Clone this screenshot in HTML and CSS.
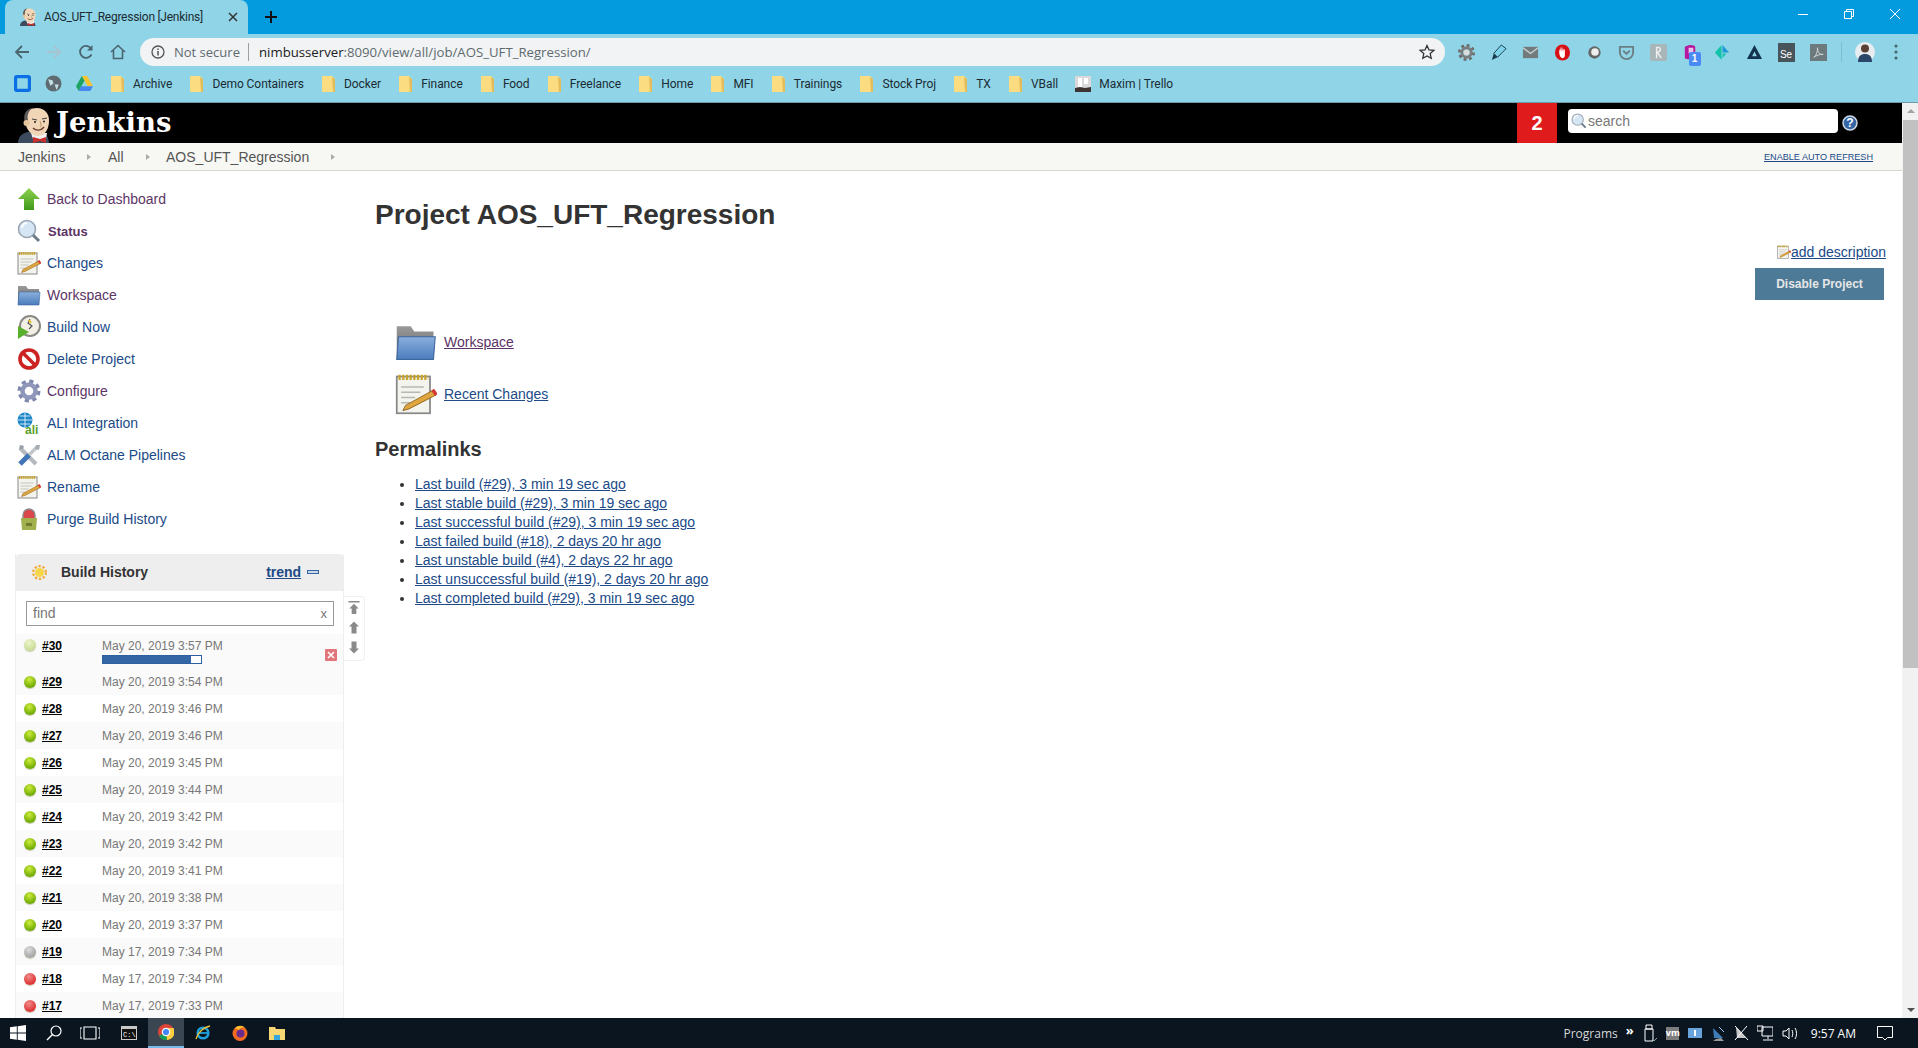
FILE: index.html
```html
<!DOCTYPE html>
<html lang="en">
<head>
    <meta charset="UTF-8">
    <meta name="viewport" content="width=device-width, initial-scale=1.0">
    <title>AOS_UFT_Regression [Jenkins]</title>
    <link rel="stylesheet" href="styles.css">
</head>
<body>

<svg class="icon-defs" width="0" height="0">
    <defs>
        <linearGradient id="greenUp" x1="0" y1="0" x2="0" y2="1"><stop offset="0" stop-color="#8fd14f"/><stop offset="1" stop-color="#3f9a1c"/></linearGradient>
        <linearGradient id="blueFolder" x1="0" y1="0" x2="0" y2="1"><stop offset="0" stop-color="#8bb0de"/><stop offset="1" stop-color="#4a7cbc"/></linearGradient>
        <linearGradient id="grayFolder" x1="0" y1="0" x2="0" y2="1"><stop offset="0" stop-color="#9a9a9a"/><stop offset="1" stop-color="#5e5e5e"/></linearGradient>
        <symbol id="jenkins" viewBox="0 0 32 36">
            <path d="M0 36c0-7 5-10 10-11h14c3 1 6 3 7 11z" fill="#3c4a5e"/>
            <path d="M13 26h16l-1 6H15z" fill="#f1f1f1"/>
            <path d="M7 12C7 4 13 1 19 1c7 0 12 5 12 12 0 7-2 11-5 14-3 2-8 3-12 0-4-3-7-8-7-15z" fill="#f0d6b7"/>
            <path d="M8 17C4 10 7 2 14 1c-4 4-5 8-4 12z" fill="#5f5b58"/>
            <circle cx="8.500" cy="16" r="3" fill="#e6c49c"/>
            <path d="M14 12l5 1M24 12l5-1" stroke="#444" stroke-width="1.200" fill="none"/>
            <circle cx="17" cy="15" r="1" fill="#222"/><circle cx="26" cy="14.500" r="1" fill="#222"/>
            <path d="M22 14c1 3 2 5 0 6" stroke="#b9926b" fill="none"/>
            <path d="M15 21c3 3 8 3 11-1" stroke="#6b3a2a" stroke-width="1.400" fill="none"/>
            <path d="M15 30l7 2 6-2v6l-6-2-7 2z" fill="#c9302c"/>
        </symbol>
        <symbol id="bmfolder" viewBox="0 0 13 16">
            <path d="M0 0h10l3 3v13H0z" fill="#fbdc80"/>
            <path d="M10 1l3 2v13h-2z" fill="#e3bd5c"/>
        </symbol>
        <symbol id="arrowUp" viewBox="0 0 24 24">
            <path d="M12 1l11 11h-6v11H7V12H1z" fill="url(#greenUp)"/>
        </symbol>
        <symbol id="lens" viewBox="0 0 24 24">
            <circle cx="10" cy="10" r="8.500" fill="#d6e6f5" stroke="#9aa7b5" stroke-width="1.600"/>
            <path d="M5 9a5 5 0 0 1 5-5" stroke="#fff" stroke-width="2" fill="none"/>
            <path d="M16 16l6 6" stroke="#6e7c8a" stroke-width="3"/>
        </symbol>
        <symbol id="notepad" viewBox="0 0 24 24">
            <rect x="1" y="2" width="19" height="21" fill="#f4f4ef" stroke="#888"/>
            <path d="M2 2.500h17" stroke="#c9a42c" stroke-width="3" stroke-dasharray="1.300 .8"/>
            <path d="M3.500 8h13M3.500 11h11M3.500 14h8M3.500 17h5" stroke="#b8b8b2" stroke-width=".8"/>
            <path d="M6 18.500L21.500 10l2 2.500L8 20.500l-3.500 1z" fill="#dfa63f" stroke="#8a6018" stroke-width=".5"/>
            <path d="M21.500 9.600l2.200 2.900" stroke="#d33833" stroke-width="2"/>
        </symbol>
        <symbol id="folder" viewBox="0 0 24 24">
            <path d="M1 3h8l2 3h11v16H1z" fill="url(#grayFolder)"/>
            <path d="M2 9h21l-1 13H1z" fill="url(#blueFolder)" stroke="#3d679e" stroke-width=".6"/>
        </symbol>
        <symbol id="clock" viewBox="0 0 24 24">
            <circle cx="13" cy="11" r="10" fill="#f2f0e4" stroke="#8a8a84" stroke-width="2"/>
            <path d="M13 4l-2 4 4 3-3 3" stroke="#555" stroke-width="1.200" fill="none"/>
            <path d="M12 5l2 3" stroke="#e8c02c" stroke-width="2"/>
            <path d="M1 11l11 6-11 7z" fill="#58b02c"/>
        </symbol>
        <symbol id="nogo" viewBox="0 0 24 24">
            <circle cx="12" cy="12" r="9" fill="#fff" stroke="#cc2222" stroke-width="3.600"/>
            <path d="M5.500 5.500l13 13" stroke="#cc2222" stroke-width="3.600"/>
        </symbol>
        <symbol id="gear" viewBox="0 0 24 24">
            <circle cx="12" cy="12" r="9.500" fill="none" stroke="#7f89ad" stroke-width="4" stroke-dasharray="4 3.460"/>
            <circle cx="12" cy="12" r="6.500" fill="none" stroke="#8f98ba" stroke-width="4.500"/>
            <circle cx="12" cy="12" r="3.500" fill="#fff"/>
        </symbol>
        <symbol id="ali" viewBox="0 0 24 24">
            <circle cx="8" cy="9" r="7.500" fill="#1d87c9"/>
            <path d="M1 9h14M8 2v14M3 5h10M3 13h10" stroke="#fff" stroke-width=".8"/>
            <text x="8" y="23" class="ali-text">ali</text>
        </symbol>
        <symbol id="tools" viewBox="0 0 24 24">
            <path d="M3 5l16 16" stroke="#b5b9bf" stroke-width="4"/>
            <path d="M2 6l1-4 4 1-1 3z" fill="#9aa0a8"/>
            <path d="M12 12l8-8" stroke="#c3c7cc" stroke-width="3.500"/>
            <path d="M23 2l-1 5-4-1 1-4z" fill="#a8acb3"/>
            <path d="M3 21l9-9" stroke="#3f74b5" stroke-width="5"/>
        </symbol>
        <symbol id="purge" viewBox="0 0 24 24">
            <path d="M6 12V8a6 6 0 0 1 12 0v4z" fill="#d9474a" stroke="#8d8d8d" stroke-width="1.400"/>
            <path d="M4 11h16l-1 12H5z" fill="#a3b04e"/>
            <path d="M9 16h6v3H9z" fill="#6f7c2c"/>
        </symbol>
        <symbol id="toparrow" viewBox="0 0 12 14">
            <path d="M0 0h12v1.500H0zM6 3l5 5H8.500v6h-5V8H1z" fill="#8a8a8a"/>
        </symbol>
        <symbol id="uparrow" viewBox="0 0 12 12">
            <path d="M6 0l5 5H8.500v7h-5V5H1z" fill="#8a8a8a"/>
        </symbol>
    </defs>
</svg>

<div class="browser">

    <div class="tabstrip">
        <div class="tab">
            <svg class="tab-favicon"><use href="#jenkins"/></svg>
            <span class="tab-title">AOS_UFT_Regression [Jenkins]</span>
            <svg class="tab-close" viewBox="0 0 10 10"><path d="M1 1l8 8M9 1l-8 8" stroke="#333" stroke-width="1.500"/></svg>
        </div>
        <svg class="new-tab" viewBox="0 0 14 14"><path d="M7 1v12M1 7h12" stroke="#111" stroke-width="2"/></svg>
        <div class="window-controls">
            <svg class="win-btn" viewBox="0 0 12 12"><path d="M1 6.500h10" stroke="#fff"/></svg>
            <svg class="win-btn" viewBox="0 0 12 12"><path d="M1.500 3.500h7v7h-7zM3.500 3.500v-2h7v7h-2" stroke="#fff" fill="none"/></svg>
            <svg class="win-btn" viewBox="0 0 12 12"><path d="M1 1l10 10M11 1L1 11" stroke="#fff"/></svg>
        </div>
    </div>

    <div class="toolbar">
        <svg class="nav-btn" viewBox="0 0 16 16"><path d="M15 8H2M8 2L2 8l6 6" stroke="#4b6470" stroke-width="1.800" fill="none"/></svg>
        <svg class="nav-btn" viewBox="0 0 16 16"><path d="M1 8h13M8 2l6 6-6 6" stroke="#a7c3cf" stroke-width="1.800" fill="none"/></svg>
        <svg class="nav-btn" viewBox="0 0 16 16"><path d="M13.500 10.500A6 6 0 1 1 13 4.500" stroke="#4b6470" stroke-width="1.800" fill="none"/><path d="M14.500 1v5.500H9z" fill="#4b6470"/></svg>
        <svg class="nav-btn" viewBox="0 0 16 16"><path d="M1 8l7-6.500L15 8M3.500 6.500V14.500h9V6.500" stroke="#4b6470" stroke-width="1.600" fill="none"/></svg>
        <div class="omnibox">
            <svg class="omni-info" viewBox="0 0 14 14"><circle cx="7" cy="7" r="6" fill="none" stroke="#555" stroke-width="1.300"/><path d="M7 6v4.500M7 3.500v1.500" stroke="#555" stroke-width="1.500"/></svg>
            <span class="omni-secure">Not secure</span>
            <span class="omni-url"><span class="omni-host">nimbusserver</span>:8090/view/all/job/AOS_UFT_Regression/</span>
            <svg class="omni-star" viewBox="0 0 16 16"><path d="M8 1.500l2 4.400 4.800.5-3.600 3.200 1 4.700L8 11.900l-4.200 2.400 1-4.700L1.200 6.400 6 5.900z" fill="none" stroke="#333" stroke-width="1.300"/></svg>
        </div>
        <div class="extensions">
            <svg class="ext" viewBox="0 0 18 18"><circle cx="9" cy="9" r="7.500" fill="none" stroke="#6b6b6b" stroke-width="3" stroke-dasharray="3 2.890"/><circle cx="9" cy="9" r="5" fill="none" stroke="#7d7d7d" stroke-width="3"/><circle cx="9" cy="9" r="3" fill="#dcdcdc"/></svg>
            <svg class="ext" viewBox="0 0 18 18"><path d="M12 1l5 4-9 9-4-4z" fill="#7fd3e8" stroke="#1b3a4a" stroke-width="1"/><path d="M4 10l4 4-6 3z" fill="#1b3a4a"/></svg>
            <svg class="ext" viewBox="0 0 18 18"><rect x="1" y="3" width="16" height="12" fill="#727a7c"/><path d="M1 4l8 6 8-6" stroke="#c7d4d8" stroke-width="1.500" fill="none"/></svg>
            <svg class="ext" viewBox="0 0 18 18"><ellipse cx="9" cy="9" rx="8" ry="8.500" fill="#d90f16"/><path d="M5.500 8V5l1 3V3l1.200 5V2.500L9 8V3l1.200 5V5l1.300 1v6c0 2-1 3-2.500 3-2 0-3.500-3-3.500-7z" fill="#fff"/></svg>
            <svg class="ext" viewBox="0 0 18 18"><circle cx="9" cy="9" r="6.500" fill="#666"/><circle cx="9.500" cy="8.500" r="4" fill="#eee"/></svg>
            <svg class="ext" viewBox="0 0 18 18"><path d="M2 3h14v6a7 7 0 0 1-14 0z" fill="none" stroke="#6c7f85" stroke-width="2"/><path d="M5.500 7L9 10.500 12.500 7" stroke="#6c7f85" stroke-width="2" fill="none"/></svg>
            <svg class="ext" viewBox="0 0 18 18"><rect width="18" height="18" rx="2" fill="#a8b5b9"/><path d="M7 3v12M7 4c4-2 6 3 1 5l4 6" stroke="#eee" stroke-width="1.500" fill="none"/></svg>
            <div class="ext-wrap">
                <svg class="ext" viewBox="0 0 18 18"><path d="M3 3c5-3 10-2 11 0v10c-3 3-8 4-11 2z" fill="#b5179e"/><rect x="7" y="4" width="5" height="6" fill="#e7c5e8"/></svg>
                <span class="ext-badge">1</span>
            </div>
            <svg class="ext" viewBox="0 0 18 18"><path d="M8 1v16L1 9z" fill="#12c2a9"/><path d="M9 1l7 8H9z" fill="#1d9ad6"/><path d="M9 10h4l-4 5z" fill="#12c2a9"/></svg>
            <svg class="ext" viewBox="0 0 18 18"><path d="M9 1l8 15H1z" fill="#12324f"/><path d="M9 8l2.500 5h-5z" fill="#8fd5e7"/></svg>
            <div class="ext-se">Se</div>
            <svg class="ext" viewBox="0 0 18 18"><rect width="18" height="18" fill="#6d7a7d"/><path d="M4 14c3-2 4-6 4-10 0 5 2 7 6 7-4 0-7 1-10 3z" stroke="#d3d9da" fill="none"/></svg>
            <span class="ext-divider"></span>
            <svg class="ext-avatar" viewBox="0 0 20 20"><circle cx="10" cy="10" r="10" fill="#e9ecef"/><path d="M3 20c0-6 3-8 7-8s7 2 7 8z" fill="#2a4668"/><circle cx="10" cy="6.500" r="4" fill="#5b4034"/></svg>
            <svg class="ext-menu" viewBox="0 0 4 16"><circle cx="2" cy="2" r="1.600" fill="#4b6470"/><circle cx="2" cy="8" r="1.600" fill="#4b6470"/><circle cx="2" cy="14" r="1.600" fill="#4b6470"/></svg>
        </div>
    </div>

    <div class="bookmarks">
        <svg class="bm-app" viewBox="0 0 16 16"><rect x="1.500" y="1.500" width="13" height="13" rx="1" fill="none" stroke="#0b6fe6" stroke-width="3"/></svg>
        <svg class="bm-app" viewBox="0 0 16 16"><circle cx="8" cy="8" r="7.500" fill="#5f6b70"/><path d="M3 4l4 1 1 3-3 2zM9 9l4 0-2 5z" fill="#c5dfe7"/></svg>
        <svg class="bm-app bm-drive" viewBox="0 0 16 16"><path d="M5.500 1h5L16 10.500h-5z" fill="#f6c42d"/><path d="M5.500 1L0 10.500 2.500 15 8 5.500z" fill="#1ea362"/><path d="M2.500 15h11l2.500-4.500H5z" fill="#4688f1"/></svg>
        <div class="bm"><svg class="bm-folder"><use href="#bmfolder"/></svg>Archive</div>
        <div class="bm"><svg class="bm-folder"><use href="#bmfolder"/></svg>Demo Containers</div>
        <div class="bm"><svg class="bm-folder"><use href="#bmfolder"/></svg>Docker</div>
        <div class="bm"><svg class="bm-folder"><use href="#bmfolder"/></svg>Finance</div>
        <div class="bm"><svg class="bm-folder"><use href="#bmfolder"/></svg>Food</div>
        <div class="bm"><svg class="bm-folder"><use href="#bmfolder"/></svg>Freelance</div>
        <div class="bm"><svg class="bm-folder"><use href="#bmfolder"/></svg>Home</div>
        <div class="bm"><svg class="bm-folder"><use href="#bmfolder"/></svg>MFI</div>
        <div class="bm"><svg class="bm-folder"><use href="#bmfolder"/></svg>Trainings</div>
        <div class="bm"><svg class="bm-folder"><use href="#bmfolder"/></svg>Stock Proj</div>
        <div class="bm"><svg class="bm-folder"><use href="#bmfolder"/></svg>TX</div>
        <div class="bm"><svg class="bm-folder"><use href="#bmfolder"/></svg>VBall</div>
        <div class="bm bm-trello">
            <svg class="bm-folder bm-photo" viewBox="0 0 16 16"><rect width="16" height="16" fill="#d9d9d9"/><rect x="3" y="2" width="4" height="9" fill="#fff"/><rect x="9" y="2" width="4" height="6" fill="#fff"/><path d="M0 16v-4l5-1 5 1 6-1v5z" fill="#3d3431"/></svg>
            Maxim | Trello
        </div>
    </div>

    <div class="page">
        <div class="page-content">

            <header class="jenkins-header">
                <svg class="logo-head"><use href="#jenkins"/></svg>
                <span class="logo-text">Jenkins</span>
                <span class="queue-count">2</span>
                <div class="search-box">
                    <svg class="search-icon"><use href="#lens"/></svg>
                    <span>search</span>
                </div>
                <svg class="help-icon" viewBox="0 0 16 16"><circle cx="8" cy="8" r="7" fill="#3465a4" stroke="#cfd9e6" stroke-width="1.500"/><text x="8" y="12" class="help-mark">?</text></svg>
            </header>

            <nav class="breadcrumbs">
                <span class="crumb">Jenkins</span><span class="crumb-sep"></span>
                <span class="crumb">All</span><span class="crumb-sep"></span>
                <span class="crumb">AOS_UFT_Regression</span><span class="crumb-sep"></span>
                <a class="auto-refresh">ENABLE AUTO REFRESH</a>
            </nav>

            <div class="columns">
                <aside class="sidebar">
                    <ul class="tasks">
                        <li><svg class="task-icon"><use href="#arrowUp"/></svg><a class="visited">Back to Dashboard</a></li>
                        <li class="task-current"><svg class="task-icon"><use href="#lens"/></svg><a class="visited">Status</a></li>
                        <li><svg class="task-icon"><use href="#notepad"/></svg><a>Changes</a></li>
                        <li><svg class="task-icon"><use href="#folder"/></svg><a class="visited">Workspace</a></li>
                        <li><svg class="task-icon"><use href="#clock"/></svg><a>Build Now</a></li>
                        <li><svg class="task-icon"><use href="#nogo"/></svg><a>Delete Project</a></li>
                        <li><svg class="task-icon"><use href="#gear"/></svg><a class="visited">Configure</a></li>
                        <li><svg class="task-icon"><use href="#ali"/></svg><a>ALI Integration</a></li>
                        <li><svg class="task-icon"><use href="#tools"/></svg><a>ALM Octane Pipelines</a></li>
                        <li><svg class="task-icon"><use href="#notepad"/></svg><a>Rename</a></li>
                        <li><svg class="task-icon"><use href="#purge"/></svg><a>Purge Build History</a></li>
                    </ul>

                    <div class="history-wrap">
                        <section class="history">
                            <div class="history-head">
                                <svg class="sun" viewBox="0 0 16 16"><circle cx="8" cy="8" r="6.800" fill="none" stroke="#f2a93b" stroke-width="2.400" stroke-dasharray="2.500 1.800"/><circle cx="8" cy="8" r="4.800" fill="#f7d64a"/></svg>
                                <span class="history-title">Build History</span>
                                <a class="trend">trend</a>
                                <span class="collapse"></span>
                            </div>
                            <div class="history-find"><span>find</span><span class="find-x">x</span></div>
                            <div class="build build-running">
                                <span class="ball ball-pending"></span>
                                <a class="build-no">#30</a>
                                <div class="build-date">
                                    May 20, 2019 3:57 PM
                                    <div class="progress"><div class="progress-fill"></div></div>
                                </div>
                                <svg class="build-stop" viewBox="0 0 12 12"><rect width="12" height="12" rx="1" fill="#e2757b"/><path d="M3 3l6 6M9 3l-6 6" stroke="#fff" stroke-width="1.600"/></svg>
                            </div>
                            <div class="build"><span class="ball"></span><a class="build-no">#29</a><div class="build-date">May 20, 2019 3:54 PM</div></div>
                            <div class="build"><span class="ball"></span><a class="build-no">#28</a><div class="build-date">May 20, 2019 3:46 PM</div></div>
                            <div class="build"><span class="ball"></span><a class="build-no">#27</a><div class="build-date">May 20, 2019 3:46 PM</div></div>
                            <div class="build"><span class="ball"></span><a class="build-no">#26</a><div class="build-date">May 20, 2019 3:45 PM</div></div>
                            <div class="build"><span class="ball"></span><a class="build-no">#25</a><div class="build-date">May 20, 2019 3:44 PM</div></div>
                            <div class="build"><span class="ball"></span><a class="build-no">#24</a><div class="build-date">May 20, 2019 3:42 PM</div></div>
                            <div class="build"><span class="ball"></span><a class="build-no">#23</a><div class="build-date">May 20, 2019 3:42 PM</div></div>
                            <div class="build"><span class="ball"></span><a class="build-no">#22</a><div class="build-date">May 20, 2019 3:41 PM</div></div>
                            <div class="build"><span class="ball"></span><a class="build-no">#21</a><div class="build-date">May 20, 2019 3:38 PM</div></div>
                            <div class="build"><span class="ball"></span><a class="build-no">#20</a><div class="build-date">May 20, 2019 3:37 PM</div></div>
                            <div class="build"><span class="ball ball-aborted"></span><a class="build-no">#19</a><div class="build-date">May 17, 2019 7:34 PM</div></div>
                            <div class="build"><span class="ball ball-failed"></span><a class="build-no">#18</a><div class="build-date">May 17, 2019 7:34 PM</div></div>
                            <div class="build"><span class="ball ball-failed"></span><a class="build-no">#17</a><div class="build-date">May 17, 2019 7:33 PM</div></div>
                        </section>
                        <div class="history-arrows">
                            <svg class="page-arrow"><use href="#toparrow"/></svg>
                            <svg class="page-arrow"><use href="#uparrow"/></svg>
                            <svg class="page-arrow page-arrow-down"><use href="#uparrow"/></svg>
                        </div>
                    </div>
                </aside>

                <main class="main">
                    <h1>Project AOS_UFT_Regression</h1>
                    <div class="description-row">
                        <svg class="desc-icon"><use href="#notepad"/></svg><a class="link">add description</a>
                    </div>
                    <div class="disable-row"><button class="disable-btn">Disable Project</button></div>

                    <div class="big-link"><svg class="big-icon"><use href="#folder"/></svg><a class="link visited">Workspace</a></div>
                    <div class="big-link"><svg class="big-icon"><use href="#notepad"/></svg><a class="link">Recent Changes</a></div>

                    <h2>Permalinks</h2>
                    <ul class="permalinks">
                        <li><a class="link">Last build (#29), 3 min 19 sec ago</a></li>
                        <li><a class="link">Last stable build (#29), 3 min 19 sec ago</a></li>
                        <li><a class="link">Last successful build (#29), 3 min 19 sec ago</a></li>
                        <li><a class="link">Last failed build (#18), 2 days 20 hr ago</a></li>
                        <li><a class="link">Last unstable build (#4), 2 days 22 hr ago</a></li>
                        <li><a class="link">Last unsuccessful build (#19), 2 days 20 hr ago</a></li>
                        <li><a class="link">Last completed build (#29), 3 min 19 sec ago</a></li>
                    </ul>
                </main>
            </div>
        </div>

        <div class="scrollbar">
            <span class="scroll-up"></span>
            <div class="scroll-thumb"></div>
            <span class="scroll-down"></span>
        </div>
    </div>

    <footer class="taskbar">
        <svg class="task-win" viewBox="0 0 16 16"><path d="M0 2.300l6.800-1v6.300H0zM7.700 1.200L16 0v7.600H7.700zM0 8.400h6.800v6.300L0 13.700zM7.700 8.400H16V16l-8.300-1.200z" fill="#fff"/></svg>
        <svg class="task-search" viewBox="0 0 16 16"><circle cx="10" cy="6" r="5" fill="none" stroke="#fff" stroke-width="1.200"/><path d="M6.500 9.500L1 15" stroke="#fff" stroke-width="1.400"/></svg>
        <svg class="task-view" viewBox="0 0 20 14"><path d="M4 1h12v12H4zM2 2H0v10h2M18 2h2v10h-2" fill="none" stroke="#fff" stroke-width="1.100"/></svg>
        <svg class="task-cmd" viewBox="0 0 16 14"><rect width="16" height="14" fill="#c9c9c9"/><rect x="1" y="3" width="14" height="10" fill="#111"/><text x="2" y="11" class="cmd-text">C:\</text></svg>
        <div class="task-active">
            <svg class="task-app" viewBox="0 0 16 16"><circle cx="8" cy="8" r="8" fill="#db4437"/><path d="M8 8L1 12a8 8 0 0 0 8 4z" fill="#0f9d58"/><path d="M8 4h7.500A8 8 0 0 1 9 16z" fill="#ffcd40"/><circle cx="8" cy="8" r="3.700" fill="#4285f4" stroke="#fff" stroke-width="1.200"/></svg>
        </div>
        <svg class="task-app task-gap" viewBox="0 0 16 16"><circle cx="8" cy="8" r="5.300" fill="none" stroke="#1ea0dc" stroke-width="2.600"/><path d="M3 8h10" stroke="#1ea0dc" stroke-width="1.800"/><path d="M1 14C3 7 9 2 15 1" stroke="#f4c430" stroke-width="1.300" fill="none"/></svg>
        <svg class="task-app task-gap" viewBox="0 0 16 16"><circle cx="8" cy="8.500" r="7.500" fill="#f26b21"/><circle cx="8.500" cy="8.500" r="4" fill="#6a2a8e"/><path d="M3 3c3-3 8-3 10 0-3-1-5 0-6 2z" fill="#fcc02e"/></svg>
        <svg class="task-app task-gap" viewBox="0 0 16 16"><path d="M0 2h6l1 2h9v11H0z" fill="#f7d774"/><path d="M5 10h6v5H5z" fill="#35a6dc"/></svg>

        <div class="tray">
            <span class="tray-programs">Programs</span>
            <span class="tray-more">»</span>
            <svg class="tray-icon" viewBox="0 0 14 18"><path d="M3 1h6v4H3zM2 5h8v12H2z" fill="none" stroke="#fff"/><path d="M9 15l2 2 3-3" stroke="#8aa" fill="none"/></svg>
            <span class="tray-vm">vm</span>
            <svg class="tray-icon" viewBox="0 0 14 18"><rect y="4" width="14" height="10" fill="#69a5dc"/><path d="M6 6h2v6H6z" fill="#fff"/></svg>
            <svg class="tray-icon" viewBox="0 0 14 18"><path d="M2 4l10 10-9 0z" fill="#3f7cb5"/><path d="M5 15l-3 2h11l-3-3z" fill="#999"/><path d="M8 3l5 5" stroke="#9cf"/></svg>
            <svg class="tray-icon" viewBox="0 0 14 18"><path d="M2 3l10 11H3z" fill="#c8c8c8"/><path d="M1 2l13 14M13 2L1 16" stroke="#fff"/></svg>
            <svg class="tray-icon tray-net" viewBox="0 0 16 16"><path d="M5 2h11v9H5zM0 1h6v5H0zM11 11v3M6 15h10" fill="#0b1622" stroke="#fff"/></svg>
            <svg class="tray-icon tray-net" viewBox="0 0 16 16"><path d="M1 6h3l3-3v11l-3-3H1zM10 5c1 2 1 5 0 7M13 3c2 3 2 8 0 11" fill="none" stroke="#fff"/></svg>
            <span class="tray-clock">9:57 AM</span>
            <svg class="tray-note" viewBox="0 0 16 16"><path d="M.5 1.500h15v11h-5L8 15l-2.500-2.500h-5z" fill="none" stroke="#fff"/></svg>
        </div>
    </footer>
</div>

</body>
</html>
```

FILE: styles.css
```css
* {
    box-sizing: border-box;
}

html, body {
    margin: 0;
    height: 100%;
    overflow: hidden;
}

body {
    font-family: "Liberation Sans", Arial, sans-serif;
    font-size: 14px;
    color: #333;
    background: #fff;
}

a {
    color: #204a87;
}

ul {
    margin: 0;
}

.icon-defs {
    display: block;
    position: absolute;
}

.browser {
    display: flex;
    flex-direction: column;
    height: 1048px;
}

/* chrome window */

.tabstrip {
    display: flex;
    align-items: center;
    height: 34px;
    flex: none;
    padding-left: 5px;
    background: #039bde;
}

.tab {
    display: flex;
    align-items: center;
    width: 243px;
    height: 34px;
    padding: 0 0 0 15px;
    background: #8fd5e7;
    border-radius: 8px 8px 0 0;
}

.tab-favicon {
    width: 16px;
    height: 18px;
    flex: none;
}

.tab-title {
    margin-left: 8px;
    width: 177px;
    font-family: Roboto, sans-serif;
    font-size: 12px;
    letter-spacing: -0.25px;
    color: #1c2b33;
    white-space: nowrap;
}

.tab-close {
    width: 10px;
    height: 10px;
    margin-left: 7px;
}

.new-tab {
    width: 14px;
    height: 14px;
    margin-left: 16px;
}

.window-controls {
    display: flex;
    margin-left: auto;
    align-self: flex-start;
    padding-top: 8px;
    padding-right: 17px;
    gap: 34px;
}

.win-btn {
    width: 12px;
    height: 12px;
}

.toolbar {
    display: flex;
    align-items: center;
    height: 34px;
    flex: none;
    padding: 2px 0 0 14px;
    background: #8fd5e7;
}

.nav-btn {
    width: 16px;
    height: 16px;
    margin-right: 16px;
}

.omnibox {
    display: flex;
    align-items: center;
    width: 1305px;
    height: 28px;
    margin-left: -2px;
    padding-left: 11px;
    border-radius: 14px;
    background: #f1f3f4;
    font-family: "Open Sans", sans-serif;
    font-size: 13px;
    color: #5f6b70;
}

.omni-info {
    width: 14px;
    height: 14px;
}

.omni-secure {
    margin-left: 9px;
    width: 75px;
    border-right: 1px solid #9aa0a6;
    white-space: nowrap;
}

.omni-url {
    margin-left: 10px;
    font-size: 13.200px;
    white-space: nowrap;
}

.omni-host {
    color: #202124;
}

.omni-star {
    width: 16px;
    height: 16px;
    margin-left: auto;
    margin-right: 10px;
}

.extensions {
    display: flex;
    align-items: center;
    gap: 15px;
    margin-left: 12.500px;
}

.ext {
    display: block;
    width: 17px;
    height: 17px;
}

.ext-wrap {
    position: relative;
}

.ext-badge {
    position: absolute;
    left: 7px;
    top: 8px;
    width: 12px;
    height: 14px;
    border-radius: 2px;
    background: #4a8af4;
    color: #fff;
    font-size: 10px;
    font-weight: bold;
    line-height: 14px;
    text-align: center;
}

.ext-se {
    width: 17px;
    height: 19px;
    padding-top: 6px;
    background: #47545a;
    color: #fff;
    font-size: 10px;
    line-height: 12px;
    text-align: center;
}

.ext-divider {
    width: 1px;
    height: 20px;
    margin-left: -1px;
    background: #7fbecf;
}

.ext-avatar {
    width: 20px;
    height: 20px;
    margin-left: -2px;
}

.ext-menu {
    width: 4px;
    height: 16px;
    margin-left: 4px;
}

.bookmarks {
    display: flex;
    align-items: center;
    height: 35px;
    flex: none;
    padding: 0 0 3px 14px;
    background: #8fd5e7;
    border-bottom: 1px solid #6f9aa8;
    font-family: Roboto, sans-serif;
    font-size: 12px;
    letter-spacing: -0.07px;
    color: #1c2b33;
}

.bm-app {
    width: 17px;
    height: 17px;
    margin-right: 14px;
}

.bm-drive {
    margin-right: 18px;
}

.bm {
    display: flex;
    align-items: center;
    margin-right: 18.200px;
    white-space: nowrap;
}

.bm-folder {
    width: 13px;
    height: 16px;
    margin-right: 9px;
    flex: none;
}

.bm-photo {
    width: 16px;
    margin-right: 8px;
}

.bm-trello {
    margin-left: -1px;
}

/* jenkins page */

.page {
    display: flex;
    flex: 1;
    min-height: 0;
}

.page-content {
    flex: 1;
    min-width: 0;
    overflow: hidden;
}

.jenkins-header {
    display: flex;
    align-items: center;
    height: 40px;
    background: #000;
    padding-left: 18px;
}

.logo-head {
    width: 32px;
    height: 36px;
    align-self: flex-end;
}

.logo-text {
    margin: -2px 0 0 6px;
    font-family: "DejaVu Serif", serif;
    font-size: 27.500px;
    font-weight: bold;
    color: #fff;
}

.queue-count {
    width: 40px;
    height: 40px;
    margin-left: auto;
    background: #e01b1b;
    color: #fff;
    font-size: 20px;
    font-weight: bold;
    line-height: 40px;
    text-align: center;
}

.search-box {
    display: flex;
    align-items: center;
    width: 270px;
    height: 24px;
    margin: -4px 0 0 11px;
    padding-left: 3px;
    border-radius: 4px;
    background: #fff;
    font-size: 14px;
    color: #777;
}

.search-icon {
    width: 16px;
    height: 16px;
    margin-right: 1px;
}

.help-icon {
    width: 16px;
    height: 16px;
    margin-left: 4px;
    margin-right: 44px;
}

.help-mark {
    font-size: 12px;
    font-weight: bold;
    fill: #fff;
    text-anchor: middle;
}

.breadcrumbs {
    display: flex;
    align-items: center;
    height: 28px;
    padding-left: 18px;
    background: #f7f8f4;
    border-bottom: 1px solid #d3d7cf;
    font-size: 14px;
    color: #555;
}

.crumb-sep {
    width: 0;
    height: 0;
    margin: 0 16.500px 0 22px;
    border-left: 4px solid #aaa;
    border-top: 3px solid transparent;
    border-bottom: 3px solid transparent;
}

.auto-refresh {
    margin-left: auto;
    margin-right: 29px;
    font-size: 9.100px;
    text-decoration: underline;
}

.columns {
    display: flex;
}

.sidebar {
    width: 366px;
    flex: none;
    padding: 12px 0 0 15px;
}

.tasks {
    list-style: none;
    padding: 0;
}

.tasks li {
    display: flex;
    align-items: center;
    height: 32px;
}

.tasks a {
    margin-left: 6px;
}

.task-icon {
    width: 24px;
    height: 24px;
    margin-left: 2px;
    flex: none;
}

.task-current a {
    font-weight: bold;
    font-size: 13px;
    margin-left: 7px;
}

.visited {
    color: #5c3566;
}

.ali-text {
    font-size: 12px;
    font-weight: bold;
    fill: #5aa02c;
}

.history-wrap {
    display: flex;
    align-items: flex-start;
    margin-top: 19px;
}

.history {
    width: 329px;
    flex: none;
    border-right: 1px solid #eee;
    border-left: 1px solid #eee;
}

.history-head {
    display: flex;
    align-items: center;
    height: 37px;
    padding: 0 0 1px 16px;
    background: #eee;
    border-radius: 4px 4px 0 0;
}

.sun {
    width: 15px;
    height: 15px;
}

.history-title {
    margin-left: 14px;
    font-weight: bold;
    color: #333;
}

.trend {
    margin-left: 118px;
    font-weight: bold;
    text-decoration: underline;
}

.collapse {
    width: 12px;
    height: 4px;
    margin-left: 6px;
    border: 1px solid #3465a4;
    background: #cfd9e6;
}

.history-find {
    display: flex;
    justify-content: space-between;
    height: 25px;
    margin: 10px 9px 8px 10px;
    padding: 0 6px;
    border: 1px solid #999;
    color: #777;
    line-height: 22px;
}

.find-x {
    font-size: 13px;
    padding-top: 1px;
}

.build {
    display: flex;
    align-items: center;
    height: 27px;
    padding-left: 8px;
    font-size: 12px;
}

.build:nth-of-type(even) {
    background: #fafafa;
}

.build-running {
    align-items: flex-start;
    height: 34px;
    padding-top: 5px;
    background: #fafafa;
}

.ball {
    width: 12px;
    height: 12px;
    flex: none;
    border-radius: 50%;
    background: radial-gradient(circle at 45% 30%, #cdec3c, #6aa800 75%);
    box-shadow: 0 1px 1px #c9c9b0;
}

.ball-pending {
    background: radial-gradient(circle at 40% 30%, #eef5c9, #c8dc96 70%);
}

.ball-aborted {
    background: radial-gradient(circle at 40% 30%, #dcdcdc, #a5a5a5 70%);
}

.ball-failed {
    background: radial-gradient(circle at 40% 30%, #f28a8a, #dd3333 70%);
}

.build-no {
    width: 60px;
    margin-left: 6px;
    font-weight: bold;
    color: #000;
    text-decoration: underline;
}

.build-date {
    color: #777;
}

.progress {
    width: 100px;
    height: 9px;
    margin-top: 2px;
    border: 1px solid #2e5f9e;
    background: #fff;
}

.progress-fill {
    width: 90%;
    height: 100%;
    background: #3465a4;
}

.build-stop {
    width: 12px;
    height: 12px;
    margin-top: 10px;
    margin-left: 102px;
}

.history-arrows {
    display: flex;
    flex-direction: column;
    align-items: center;
    flex: none;
    gap: 7px;
    width: 21px;
    height: 65px;
    margin-top: 42px;
    padding-top: 4px;
    border: 1px solid #f0f0f0;
    border-left: none;
    border-radius: 0 4px 4px 0;
}

.page-arrow {
    width: 12px;
    height: 13px;
}

.page-arrow-down {
    transform: rotate(180deg);
}

.main {
    flex: 1;
    min-width: 0;
    padding: 27px 16px 0 9px;
}

.main h1 {
    margin: 0;
    font-size: 28px;
    line-height: 34px;
    color: #333;
}

.description-row {
    display: flex;
    justify-content: flex-end;
    align-items: center;
    height: 18px;
    margin-top: 11px;
}

.desc-icon {
    width: 14px;
    height: 14px;
}

.link {
    text-decoration: underline;
}

.link.visited {
    color: #5c3566;
}

.disable-row {
    display: flex;
    justify-content: flex-end;
    margin-top: 7px;
    padding-right: 2px;
}

.disable-btn {
    width: 129px;
    height: 32px;
    border: none;
    background: #4d7a97;
    color: #e6e6e6;
    font-family: inherit;
    font-size: 12px;
    font-weight: bold;
}

.big-link {
    display: flex;
    align-items: center;
    height: 52px;
    padding-left: 20px;
}

.disable-row + .big-link {
    margin-top: 16px;
}

.big-icon {
    width: 42px;
    height: 42px;
    margin-right: 7px;
}

.main h2 {
    margin: 17px 0 0;
    font-size: 20px;
    line-height: 24px;
    color: #333;
}

.permalinks {
    margin-top: 14px;
    padding-left: 40px;
    line-height: 19px;
}

.scrollbar {
    display: flex;
    flex-direction: column;
    align-items: center;
    width: 16px;
    flex: none;
    background: #f1f1f1;
    padding-left: 1px;
}

.scroll-up, .scroll-down {
    width: 0;
    height: 0;
    margin: 6px 0;
    border-left: 4px solid transparent;
    border-right: 4px solid transparent;
}

.scroll-up {
    border-bottom: 4px solid #a3a3a3;
}

.scroll-down {
    margin-top: auto;
    border-top: 4px solid #505050;
}

.scroll-thumb {
    width: 15px;
    height: 548px;
    margin-top: 1px;
    background: #c1c1c1;
}

/* windows taskbar */

.taskbar {
    display: flex;
    align-items: center;
    height: 30px;
    flex: none;
    padding-left: 10px;
    background: #0a1520;
    color: #fff;
    font-family: "Open Sans", sans-serif;
    font-size: 12px;
}

.task-win {
    width: 16px;
    height: 16px;
}

.task-search {
    width: 16px;
    height: 16px;
    margin-left: 20px;
}

.task-view {
    width: 20px;
    height: 14px;
    margin-left: 18px;
}

.task-cmd {
    width: 16px;
    height: 14px;
    margin-left: 21px;
}

.cmd-text {
    font-size: 7px;
    font-family: "Liberation Mono", monospace;
    fill: #fff;
}

.task-active {
    display: flex;
    align-items: center;
    justify-content: center;
    width: 36px;
    height: 30px;
    margin-left: 11px;
    background: #3a4651;
    border-bottom: 2px solid #76b9ed;
}

.task-app {
    width: 16px;
    height: 16px;
}

.task-gap {
    margin-left: 21px;
}

.task-active + .task-gap {
    margin-left: 11px;
}

.tray {
    display: flex;
    align-items: center;
    margin-left: auto;
    padding-right: 25px;
}

.tray-programs {
    color: #d7d7d7;
}

.tray-more {
    margin: -6px 0 0 8px;
    font-size: 13px;
    font-weight: bold;
}

.tray-icon {
    width: 14px;
    height: 18px;
    margin-left: 9px;
}

.tray-vm {
    width: 13px;
    height: 13px;
    margin-left: 9px;
    background: #7d7d7d;
    font-size: 9px;
    font-weight: bold;
    line-height: 12px;
    text-align: center;
}

.tray-net {
    width: 16px;
    height: 16px;
}

.tray-clock {
    margin-left: 13px;
    margin-right: 21px;
}

.tray-note {
    width: 16px;
    height: 16px;
}
```
